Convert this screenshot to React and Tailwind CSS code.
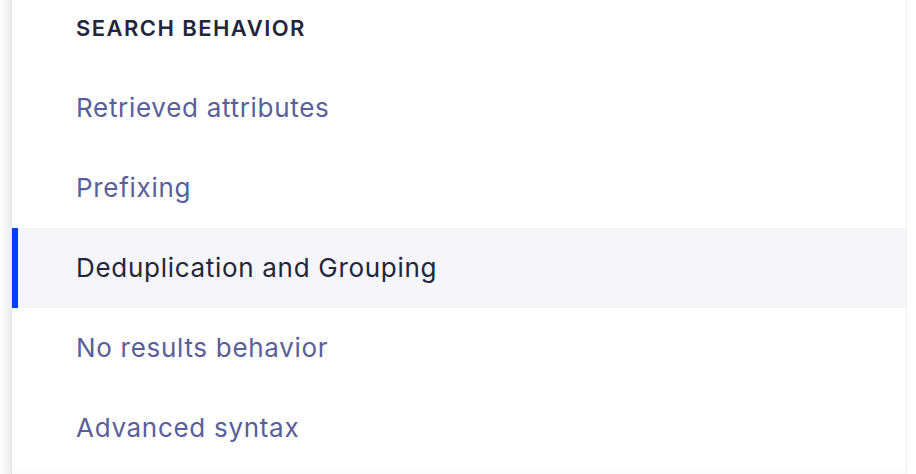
export default function App() {
  const items = [
    { label: "Retrieved attributes" },
    { label: "Prefixing" },
    { label: "Deduplication and Grouping", active: true },
    { label: "No results behavior" },
    { label: "Advanced syntax" },
  ];
  return (
    <div
      className="w-[916px] h-[474px] bg-white flex overflow-hidden"
      style={{ fontFamily: "Inter, 'Noto Sans', sans-serif" }}
    >
      <div className="w-[11px] h-full bg-gradient-to-r from-white to-[#ececee] shrink-0" />
      <div className="w-[1px] h-full bg-[#e3e3e8] shrink-0" />
      <div className="w-[894px] h-full flex flex-col shrink-0">
        <div className="h-[56px] flex items-center pl-[64px] mb-[12px]">
          <span className="text-[22px] font-semibold tracking-[1.45px] text-[#23263b] leading-none">
            SEARCH BEHAVIOR
          </span>
        </div>
        {items.map((it) => (
          <div
            key={it.label}
            className={
              it.active
                ? "h-[80px] flex items-center bg-[#f5f5fa] border-l-[6px] border-[#003dff] pl-[58px]"
                : "h-[80px] flex items-center pl-[64px]"
            }
          >
            <span
              className={
                it.active
                  ? "text-[26px] tracking-[0.7px] text-[#23263b] leading-none"
                  : "text-[26px] tracking-[0.7px] text-[#5a5e9a] leading-none"
              }
            >
              {it.label}
            </span>
          </div>
        ))}
        <div className="flex-1 bg-[#fbfbfc]" />
      </div>
      <div className="w-[1px] h-full bg-[#f0f0f4] shrink-0" />
      <div className="flex-1 h-full bg-white" />
    </div>
  );
}
